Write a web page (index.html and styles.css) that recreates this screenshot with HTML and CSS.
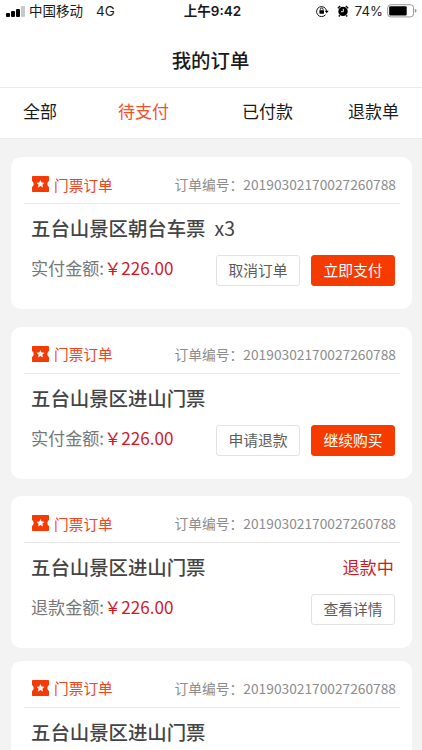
FILE: index.html
```
<!DOCTYPE html>
<html lang="zh-CN">
  <head>
    <meta charset="UTF-8" />
    <meta name="viewport" content="width=device-width, initial-scale=1.0" />
    <title>我的订单</title>
    <link rel="stylesheet" href="styles.css">
  </head>
  <body>
    <!-- shared ticket icon -->
    <svg class="symbols" aria-hidden="true">
      <symbol id="ticket" viewBox="0 0 17 16">
        <path fill="#f43b05" d="M.7 0H16.3Q17 0 17 .7V5L15.9 6.1Q14.6 8 15.9 9.9L17 11V15.3Q17 16 16.3 16H.7Q0 16 0 15.3V11L1.1 9.9Q2.4 8 1.1 6.1L0 5V.7Q0 0 .7 0Z" />
        <path fill="#fff" d="M8.5 3.9l1.2 2.6 2.8.3-2.1 1.9.6 2.8-2.5-1.4L6 11.5l.6-2.8-2.1-1.9 2.8-.3z" />
      </symbol>
    </svg>

    <div class="status-bar">
      <div class="status-left">
        <svg class="signal" width="19" height="11" viewBox="0 0 19 11">
          <rect x="0" y="7" width="4" height="4" rx="1" />
          <rect x="5" y="5" width="4" height="6" rx="1" />
          <rect x="10" y="3" width="4" height="8" rx="1" />
          <rect x="15" y="0" width="4" height="11" rx="1" fill="#c8c8c8" />
        </svg>
        <span class="carrier">中国移动</span>
        <span class="network">4G</span>
      </div>
      <div class="status-time">上午9:42</div>
      <div class="status-right">
        <svg class="lock" width="13" height="12" viewBox="0 0 13 12">
          <path d="M9.5 9.7A5 5 0 1 1 10.5 5.8" fill="none" stroke="#111" stroke-width="1" />
          <path d="M8.7 5.7h4L10.7 8.2z" />
          <rect x="3.4" y="5.3" width="4.6" height="3.4" rx=".4" />
          <path d="M4.3 5.5V4.4a1.4 1.4 0 0 1 2.8 0v1.1" fill="none" stroke="#111" stroke-width=".9" />
        </svg>
        <svg class="alarm" width="12" height="12" viewBox="0 0 12 12">
          <circle cx="6" cy="6.4" r="4.7" />
          <path d="M.8 3.2 3.2 1M11.2 3.2 8.8 1M2.8 10.2 1.8 11.4M9.2 10.2l1 1.2" stroke="#111" stroke-width="1.5" />
          <path d="M6.3 3.8v2.9H4" fill="none" stroke="#fff" stroke-width=".9" />
        </svg>
        <span class="percent">74%</span>
        <svg class="battery" width="30" height="14" viewBox="0 0 30 14">
          <rect x=".7" y=".7" width="25.8" height="12.2" rx="3" fill="none" stroke="#999" />
          <rect x="2.2" y="2.2" width="17.5" height="9.2" rx="1" />
          <path d="M27.8 4.8q1.8.7 1.8 2t-1.8 2z" fill="#999" />
        </svg>
      </div>
    </div>

    <h1 class="page-title">我的订单</h1>

    <div class="tabs">
      <a class="tab">全部</a>
      <a class="tab active">待支付</a>
      <a class="tab">已付款</a>
      <a class="tab">退款单</a>
    </div>

    <div class="orders">
      <div class="order">
        <div class="order-head">
          <svg class="ticket"><use href="#ticket" /></svg>
          <span class="order-type">门票订单</span>
          <span class="order-no">订单编号：20190302170027260788</span>
        </div>
        <div class="order-name">五台山景区朝台车票<span class="count">x3</span></div>
        <div class="order-foot">
          <div class="amount">实付金额:<span class="price">￥226.00</span></div>
          <button class="btn">取消订单</button>
          <button class="btn primary">立即支付</button>
        </div>
      </div>

      <div class="order">
        <div class="order-head">
          <svg class="ticket"><use href="#ticket" /></svg>
          <span class="order-type">门票订单</span>
          <span class="order-no">订单编号：20190302170027260788</span>
        </div>
        <div class="order-name">五台山景区进山门票</div>
        <div class="order-foot">
          <div class="amount">实付金额:<span class="price">￥226.00</span></div>
          <button class="btn">申请退款</button>
          <button class="btn primary">继续购买</button>
        </div>
      </div>

      <div class="order refund">
        <div class="order-head">
          <svg class="ticket"><use href="#ticket" /></svg>
          <span class="order-type">门票订单</span>
          <span class="order-no">订单编号：20190302170027260788</span>
        </div>
        <div class="order-name">五台山景区进山门票<span class="state">退款中</span></div>
        <div class="order-foot">
          <div class="amount">退款金额:<span class="price">￥226.00</span></div>
          <button class="btn">查看详情</button>
        </div>
      </div>

      <div class="order">
        <div class="order-head">
          <svg class="ticket"><use href="#ticket" /></svg>
          <span class="order-type">门票订单</span>
          <span class="order-no">订单编号：20190302170027260788</span>
        </div>
        <div class="order-name">五台山景区进山门票</div>
      </div>
    </div>
  </body>
</html>
```
FILE: styles.css
```
* {
  margin: 0;
  padding: 0;
  box-sizing: border-box;
}

html,
body {
  height: 100%;
  overflow: hidden;
}

body {
  display: flex;
  flex-direction: column;
  font-family: "Noto Sans CJK SC", sans-serif;
  background-color: #f3f3f3;
  color: #1a1a1a;
}

.symbols {
  display: none;
}

/* status bar */
.status-bar {
  display: grid;
  grid-template-columns: 1fr auto 1fr;
  align-items: center;
  flex: none;
  height: 22px;
  padding: 0 6px;
  background: #fff;
  font-size: 13.5px;
  line-height: 22px;
}

.status-left,
.status-right {
  display: flex;
  align-items: center;
}

.status-right {
  justify-content: flex-end;
}

.carrier {
  margin: -2px 0 0 4px;
}

.network,
.percent {
  font-family: Inter, sans-serif;
}

.network {
  margin-left: 13px;
}

.status-time {
  padding-left: 3px;
  font-family: Inter, "Noto Sans CJK SC", sans-serif;
  font-weight: 600;
}

.lock {
  margin-right: 8px;
}

.alarm {
  margin-right: 6px;
}

.percent {
  font-size: 13.2px;
  margin-right: 4px;
}

.battery {
  margin-right: -1px;
}

.page-title {
  flex: none;
  height: 66px;
  padding-right: 1px;
  border-bottom: 1px solid #ececec;
  background: #fff;
  font-size: 19.4px;
  font-weight: 500;
  line-height: 75px;
  text-align: center;
}

.tabs {
  display: grid;
  grid-template-columns: 95px 124px 106px 1fr;
  flex: none;
  height: 51px;
  padding-left: 23px;
  border-bottom: 1px solid #ececec;
  background: #fff;
}

.tab {
  font-size: 17px;
  line-height: 45px;
}

.tab.active {
  color: #f4502c;
}

/* order list */
.orders {
  display: flex;
  flex: 1;
  flex-direction: column;
  gap: 17.5px;
  min-height: 0;
  padding: 18px 10px 0 11px;
  overflow: hidden;
}

.order {
  flex: none;
  height: 152px;
  padding: 0 12px 0 13px;
  border-radius: 10px;
  background: #fff;
}

.order:last-child {
  height: 90px;
  border-radius: 10px 10px 0 0;
}

.refund {
  margin-bottom: -5px;
}

.order-head {
  display: flex;
  align-items: center;
  height: 47px;
  padding: 8px 4px 0 8px;
  border-bottom: 1px solid #e8e8e8;
}

.ticket {
  width: 17px;
  height: 16px;
}

.order-type {
  margin-left: 5px;
  color: #f04422;
  font-size: 14.7px;
}

.order-no {
  margin-left: auto;
  color: #8c8c8c;
  font-size: 13.75px;
}

.order-name {
  display: flex;
  height: 50px;
  padding: 0 6px 0 7px;
  color: #444;
  font-size: 19.4px;
  font-weight: 500;
  line-height: 48px;
}

.count {
  margin-left: 9px;
  font-weight: 400;
}

.state {
  margin-left: auto;
  color: #cf1b27;
  font-size: 17.2px;
  font-weight: 400;
}

.order-foot {
  display: flex;
  gap: 11px;
  padding: 1px 5px 0 7px;
}

.amount {
  margin-right: auto;
  color: #777;
  font-size: 17.1px;
  line-height: 25px;
}

.price {
  color: #cf1b27;
}

.btn {
  width: 84px;
  height: 31px;
  padding-bottom: 2px;
  border: 1px solid #e2e2e2;
  border-radius: 3px;
  background: #fff;
  color: #5c5c5c;
  font-family: inherit;
  font-size: 14.8px;
}

.btn.primary {
  border-color: #f53b00;
  background: #f53b00;
  color: #fff;
}
```
